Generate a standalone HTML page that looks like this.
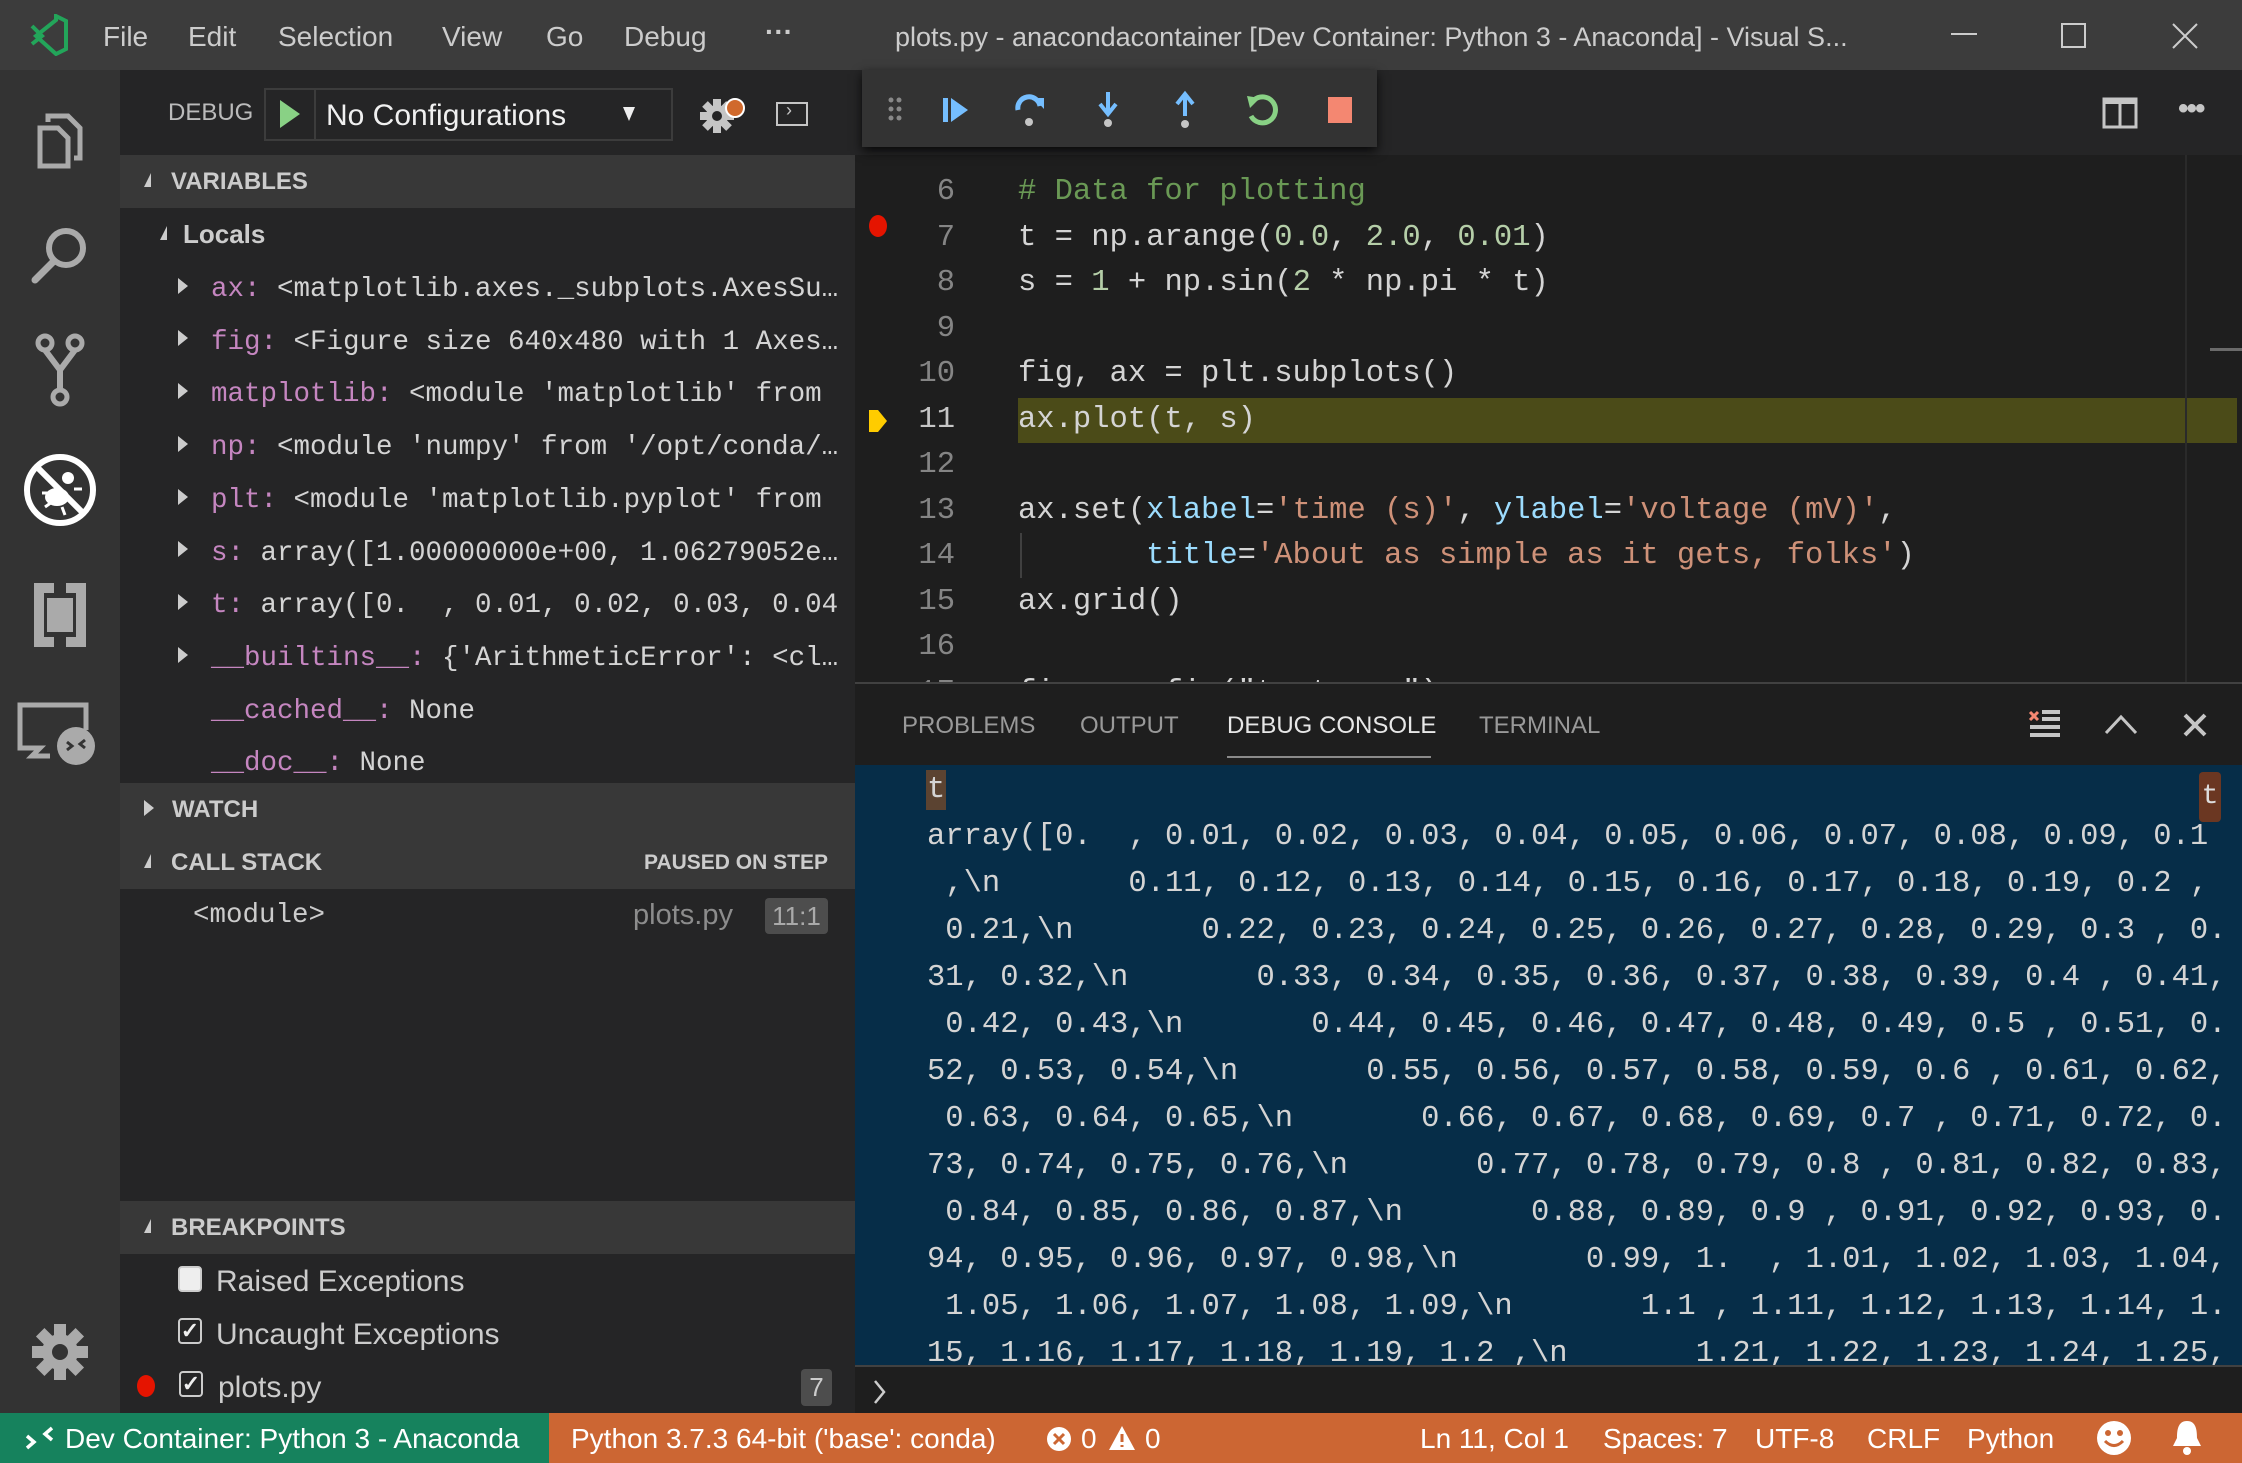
<!DOCTYPE html>
<html><head><meta charset="utf-8"><style>
*{margin:0;padding:0;box-sizing:border-box}
body{width:2242px;height:1463px;overflow:hidden;background:#1e1e1e;font-family:"Liberation Sans",sans-serif;color:#ccc;position:relative}
.a{position:absolute}
.mono{font-family:"Liberation Mono",monospace}
.t{white-space:pre}
.row{position:absolute;left:0;width:667px;height:53px;line-height:53px;white-space:pre;overflow:hidden;text-overflow:ellipsis;font-family:"Liberation Mono",monospace;font-size:27.5px;color:#d4d4d4;display:block}
.n{color:#c586c0}
.tri{display:inline-block;width:0;height:0;border-top:8px solid transparent;border-bottom:8px solid transparent;border-left:10px solid #ccc;vertical-align:middle;margin-right:23px;position:relative;top:-3px}
.trid{display:inline-block;width:0;height:0;border-left:7px solid transparent;border-bottom:14px solid #ccc;vertical-align:middle;margin-right:18px;position:relative;top:-3px}
.hdr{position:absolute;left:120px;width:735px;height:53px;line-height:53px;background:#383838;font-weight:bold;font-size:24px;color:#ccc;padding-left:24px}
.code{position:absolute;left:855px;width:1387px;height:45.5px;line-height:45.5px;font-family:"Liberation Mono",monospace;font-size:30.5px;color:#d4d4d4;white-space:pre}
.ln{position:absolute;width:100px;text-align:right;left:0;color:#858585}
.cx{position:absolute;left:163px}
.s{color:#ce9178}.nu{color:#b5cea8}.v{color:#9cdcfe}.c{color:#6a9955}
.cl{position:absolute;left:927px;height:47px;line-height:47px;font-family:"Liberation Mono",monospace;font-size:30.5px;color:#d4d4d4;white-space:pre}
.ic{position:absolute;left:0;width:120px}
</style></head><body>
<!-- title bar -->
<div class="a" style="left:0;top:0;width:2242px;height:70px;background:#3c3c3c"></div>
<svg class="a" style="left:28px;top:14px" width="40" height="42" viewBox="0 0 40 42"><path d="M28 2 L38 7 V35 L28 40 L8 22 L28 6 Z" fill="none" stroke="#23a55a" stroke-width="4"/><path d="M4 12 L14 22 L4 30" stroke="#23a55a" stroke-width="4" fill="none"/></svg>
<div class="a t" style="left:103px;top:17px;font-size:28px;color:#ccc;line-height:40px">File</div>
<div class="a t" style="left:188px;top:17px;font-size:28px;color:#ccc;line-height:40px">Edit</div>
<div class="a t" style="left:278px;top:17px;font-size:28px;color:#ccc;line-height:40px">Selection</div>
<div class="a t" style="left:442px;top:17px;font-size:28px;color:#ccc;line-height:40px">View</div>
<div class="a t" style="left:546px;top:17px;font-size:28px;color:#ccc;line-height:40px">Go</div>
<div class="a t" style="left:624px;top:17px;font-size:28px;color:#ccc;line-height:40px">Debug</div>
<div class="a t" style="left:765px;top:12px;font-size:28px;color:#ccc;line-height:40px;font-weight:bold">···</div>
<div class="a t" style="left:895px;top:17px;font-size:27px;color:#ccc;line-height:40px">plots.py - anacondacontainer [Dev Container: Python 3 - Anaconda] - Visual S...</div>
<div class="a" style="left:1951px;top:33px;width:26px;height:2px;background:#ccc"></div>
<div class="a" style="left:2061px;top:23px;width:25px;height:25px;border:2px solid #ccc"></div>
<svg class="a" style="left:2171px;top:22px" width="28" height="28"><path d="M2 2L26 26M26 2L2 26" stroke="#ccc" stroke-width="2"/></svg>

<!-- activity bar -->
<div class="a" style="left:0;top:70px;width:120px;height:1343px;background:#333"></div>
<svg class="ic" style="top:90px" height="90" viewBox="0 0 120 90"><path d="M40 38 h18 l10 10 v28 h-28 z" fill="none" stroke="#aaa" stroke-width="5"/><path d="M48 32 v-6 h20 l12 12 v30 h-6" fill="none" stroke="#aaa" stroke-width="5"/></svg>
<svg class="ic" style="top:210px" height="90" viewBox="0 0 120 90"><circle cx="66" cy="38" r="17" fill="none" stroke="#aaa" stroke-width="6"/><path d="M53 52 L35 70" stroke="#aaa" stroke-width="7" stroke-linecap="round"/></svg>
<svg class="ic" style="top:325px" height="90" viewBox="0 0 120 90"><circle cx="45" cy="18" r="7" fill="none" stroke="#aaa" stroke-width="5"/><circle cx="75" cy="18" r="7" fill="none" stroke="#aaa" stroke-width="5"/><circle cx="60" cy="72" r="7" fill="none" stroke="#aaa" stroke-width="5"/><path d="M45 25 L60 45 L75 25 M60 45 V65" fill="none" stroke="#aaa" stroke-width="6"/></svg>
<svg class="ic" style="top:445px" height="90" viewBox="0 0 120 90"><circle cx="60" cy="45" r="33" fill="none" stroke="#fff" stroke-width="6"/><path d="M37 22 L83 68" stroke="#fff" stroke-width="6"/><ellipse cx="57" cy="52" rx="12" ry="9" fill="#fff"/><circle cx="68" cy="33" r="6" fill="#fff"/><path d="M42 48 h8 M45 62 l7 -5 M62 62 l3 8 M74 44 h8" stroke="#fff" stroke-width="3"/></svg>
<svg class="ic" style="top:570px" height="90" viewBox="0 0 120 90"><path d="M34 13 h20 v10 h-10 v44 h10 v10 h-20z M86 13 h-20 v10 h10 v44 h-10 v10 h20z" fill="#aaa"/><rect x="47" y="28" width="26" height="34" fill="#aaa"/></svg>
<svg class="ic" style="top:690px" height="90" viewBox="0 0 120 90"><path d="M20 50 V15 h66 v25" fill="none" stroke="#aaa" stroke-width="5"/><path d="M20 50 v8 h20 l-8 8 h18" fill="none" stroke="#aaa" stroke-width="5"/><circle cx="76" cy="56" r="19" fill="#aaa"/><path d="M67 52 l5 4 l-5 4 M85 50 l-5 4 l5 4" stroke="#333" stroke-width="3" fill="none"/></svg>
<svg class="ic" style="top:1315px" height="75" viewBox="0 0 120 75"><g fill="#aaa" transform="translate(60 37)"><circle r="18"/><rect x="-6" y="-28" width="12" height="56"/><rect x="-6" y="-28" width="12" height="56" transform="rotate(45)"/><rect x="-6" y="-28" width="12" height="56" transform="rotate(90)"/><rect x="-6" y="-28" width="12" height="56" transform="rotate(135)"/></g><circle cx="60" cy="37" r="8" fill="#333"/></svg>

<!-- sidebar -->
<div class="a" style="left:120px;top:70px;width:735px;height:1343px;background:#252526"></div>
<div class="a t" style="left:168px;top:96px;font-size:24px;color:#bbb;line-height:34px">DEBUG</div>
<div class="a" style="left:264px;top:88px;width:409px;height:53px;border:2px solid #3c3c3c;background:#252526"></div>
<div class="a" style="left:314px;top:90px;width:2px;height:49px;background:#3c3c3c"></div>
<svg class="a" style="left:278px;top:98px" width="24" height="32"><path d="M2 2 L22 16 L2 30z" fill="#89d185"/></svg>
<div class="a t" style="left:326px;top:96px;font-size:30px;color:#f0f0f0;line-height:40px">No Configurations</div>
<svg class="a" style="left:622px;top:106px" width="14" height="16"><path d="M1 1 H13 L7 15z" fill="#eee"/></svg>
<svg class="a" style="left:697px;top:94px" width="52" height="42"><g fill="#c5c5c5" transform="translate(20 22)"><circle r="11"/><rect x="-4" y="-17" width="8" height="34"/><rect x="-4" y="-17" width="8" height="34" transform="rotate(45)"/><rect x="-4" y="-17" width="8" height="34" transform="rotate(90)"/><rect x="-4" y="-17" width="8" height="34" transform="rotate(135)"/></g><circle cx="20" cy="22" r="5" fill="#252526"/><circle cx="38" cy="14" r="9" fill="#d0692c" stroke="#fff" stroke-width="2"/></svg>
<div class="a" style="left:776px;top:102px;width:32px;height:24px;border:2px solid #c5c5c5"></div>
<div class="a t" style="left:786px;top:100px;font-size:18px;color:#c5c5c5">›</div>

<div class="hdr" style="top:155px"><span class="trid" style="margin-right:20px"></span>VARIABLES</div>
<div class="a t" style="left:160px;top:208px;height:53px;line-height:53px;font-size:26px;font-weight:bold;color:#ccc"><span class="trid" style="margin-right:16px"></span>Locals</div>
<div class="a" style="left:178px;top:263px;width:667px;height:530px">
<div class="row" style="top:0"><span class="tri"></span><span class="n">ax:</span> &lt;matplotlib.axes._subplots.AxesSubplot</div>
<div class="row" style="top:52.7px"><span class="tri"></span><span class="n">fig:</span> &lt;Figure size 640x480 with 1 Axes&gt; xx</div>
<div class="row" style="top:105.4px"><span class="tri"></span><span class="n">matplotlib:</span> &lt;module 'matplotlib' from</div>
<div class="row" style="top:158.1px"><span class="tri"></span><span class="n">np:</span> &lt;module 'numpy' from '/opt/conda/lib</div>
<div class="row" style="top:210.8px"><span class="tri"></span><span class="n">plt:</span> &lt;module 'matplotlib.pyplot' from</div>
<div class="row" style="top:263.5px"><span class="tri"></span><span class="n">s:</span> array([1.00000000e+00, 1.06279052e+00</div>
<div class="row" style="top:316.2px"><span class="tri"></span><span class="n">t:</span> array([0.  , 0.01, 0.02, 0.03, 0.04</div>
<div class="row" style="top:368.9px"><span class="tri"></span><span class="n">__builtins__:</span> {'ArithmeticError': &lt;class</div>
<div class="row" style="top:421.6px;padding-left:33px"><span class="n">__cached__:</span> None</div>
<div class="row" style="top:474.3px;padding-left:33px"><span class="n">__doc__:</span> None</div>
</div>
<div class="hdr" style="top:783px"><span class="tri" style="margin-right:18px;border-left-color:#ccc"></span>WATCH</div>
<div class="hdr" style="top:836px"><span class="trid" style="margin-right:20px"></span>CALL STACK<span style="position:absolute;right:27px;font-size:21px">PAUSED ON STEP</span></div>
<div class="a mono t" style="left:193px;top:889px;line-height:53px;font-size:27.5px;color:#ccc">&lt;module&gt;</div>
<div class="a t" style="left:633px;top:889px;line-height:53px;font-size:29px;color:#8c8c8c">plots.py</div>
<div class="a t" style="left:765px;top:898px;width:63px;height:36px;line-height:36px;text-align:center;background:#4d4d4d;border-radius:4px;font-size:26px;color:#aaa">11:1</div>
<div class="hdr" style="top:1201px"><span class="trid" style="margin-right:20px"></span>BREAKPOINTS</div>
<div class="a" style="left:178px;top:1266px;width:24px;height:26px;border:2px solid #ccc;border-radius:4px;background:#eee"></div>
<div class="a t" style="left:216px;top:1257px;line-height:50px;font-size:30px;color:#ccc">Raised Exceptions</div>
<div class="a" style="left:178px;top:1318px;width:24px;height:26px;border:2px solid #ccc;border-radius:4px;background:#252526;color:#eee;font-size:22px;line-height:22px;text-align:center;font-weight:bold">✓</div>
<div class="a t" style="left:216px;top:1310px;line-height:50px;font-size:30px;color:#ccc">Uncaught Exceptions</div>
<div class="a" style="left:137px;top:1375px;width:18px;height:22px;border-radius:50%;background:#e51400"></div>
<div class="a" style="left:179px;top:1371px;width:24px;height:26px;border:2px solid #ccc;border-radius:4px;background:#252526;color:#eee;font-size:22px;line-height:22px;text-align:center;font-weight:bold">✓</div>
<div class="a t" style="left:218px;top:1363px;line-height:50px;font-size:30px;color:#ccc">plots.py</div>
<div class="a t" style="left:801px;top:1369px;width:31px;height:37px;line-height:37px;text-align:center;background:#4d4d4d;border-radius:4px;font-size:26px;color:#ccc">7</div>

<!-- editor tabs area -->
<div class="a" style="left:855px;top:70px;width:1387px;height:85px;background:#252526"></div>
<svg class="a" style="left:2102px;top:97px" width="36" height="32"><rect x="2" y="2" width="32" height="28" fill="none" stroke="#c5c5c5" stroke-width="3"/><path d="M18 2V30" stroke="#c5c5c5" stroke-width="3"/><rect x="2" y="2" width="32" height="5" fill="#c5c5c5"/></svg>
<div class="a t" style="left:2178px;top:92px;font-size:30px;font-weight:bold;color:#c5c5c5;letter-spacing:-2px">•••</div>

<!-- code -->
<div class="a" style="left:855px;top:155px;width:1387px;height:527px;background:#1e1e1e;overflow:hidden">
<div class="a" style="left:163px;top:242.5px;width:1219px;height:45.5px;background:#4b4b18"></div>
<div class="a" style="left:165px;top:378px;width:2px;height:45px;background:#404040"></div>
<div class="a" style="left:1330px;top:0;width:2px;height:527px;background:#2a2a2a"></div>
<div class="a" style="left:1355px;top:193px;width:32px;height:3px;background:#6a6a6a"></div>
<div class="code" style="left:0;top:15px"><span class="ln">6</span><span class="cx c"># Data for plotting</span></div>
<div class="code" style="left:0;top:60.5px"><span class="ln">7</span><span class="cx">t = np.arange(<span class="nu">0.0</span>, <span class="nu">2.0</span>, <span class="nu">0.01</span>)</span></div>
<div class="code" style="left:0;top:106px"><span class="ln">8</span><span class="cx">s = <span class="nu">1</span> + np.sin(<span class="nu">2</span> * np.pi * t)</span></div>
<div class="code" style="left:0;top:151.5px"><span class="ln">9</span></div>
<div class="code" style="left:0;top:197px"><span class="ln">10</span><span class="cx">fig, ax = plt.subplots()</span></div>
<div class="code" style="left:0;top:242.5px"><span class="ln" style="color:#c6c6c6">11</span><span class="cx">ax.plot(t, s)</span></div>
<div class="code" style="left:0;top:288px"><span class="ln">12</span></div>
<div class="code" style="left:0;top:333.5px"><span class="ln">13</span><span class="cx">ax.set(<span class="v">xlabel</span>=<span class="s">'time (s)'</span>, <span class="v">ylabel</span>=<span class="s">'voltage (mV)'</span>,</span></div>
<div class="code" style="left:0;top:379px"><span class="ln">14</span><span class="cx">       <span class="v">title</span>=<span class="s">'About as simple as it gets, folks'</span>)</span></div>
<div class="code" style="left:0;top:424.5px"><span class="ln">15</span><span class="cx">ax.grid()</span></div>
<div class="code" style="left:0;top:470px"><span class="ln">16</span></div>
<div class="code" style="left:0;top:515.5px"><span class="ln">17</span><span class="cx">fig.savefig("test.png")</span></div>
<div class="a" style="left:14px;top:60px;width:18px;height:22px;border-radius:50%;background:#e51400"></div>
<svg class="a" style="left:13px;top:254px" width="20" height="24"><path d="M1 1 H10 L19 12 L10 23 H1z" fill="#ffcc00"/></svg>
</div>

<!-- debug toolbar -->
<div class="a" style="left:862px;top:70px;width:515px;height:77px;background:#333;box-shadow:0 4px 10px rgba(0,0,0,.8)"></div>
<svg class="a" style="left:887px;top:96px" width="16" height="26"><g fill="#888"><circle cx="4" cy="4" r="2.5"/><circle cx="12" cy="4" r="2.5"/><circle cx="4" cy="13" r="2.5"/><circle cx="12" cy="13" r="2.5"/><circle cx="4" cy="22" r="2.5"/><circle cx="12" cy="22" r="2.5"/></g></svg>
<svg class="a" style="left:940px;top:94px" width="32" height="32"><rect x="3" y="4" width="5" height="24" fill="#75beff"/><path d="M11 4 L28 16 L11 28z" fill="#75beff"/></svg>
<svg class="a" style="left:1012px;top:92px" width="36" height="38"><path d="M6 18 A11 11 0 0 1 28 14" fill="none" stroke="#75beff" stroke-width="5"/><path d="M22 6 H32 V17z" fill="#75beff"/><circle cx="17" cy="30" r="4" fill="#c5c5c5"/></svg>
<svg class="a" style="left:1096px;top:90px" width="24" height="40"><path d="M12 2 V22" stroke="#75beff" stroke-width="4"/><path d="M4 14 L12 24 L20 14" stroke="#75beff" stroke-width="4" fill="none"/><circle cx="12" cy="33" r="4" fill="#c5c5c5"/></svg>
<svg class="a" style="left:1173px;top:90px" width="24" height="40"><path d="M12 6 V26" stroke="#75beff" stroke-width="4"/><path d="M4 14 L12 4 L20 14" stroke="#75beff" stroke-width="4" fill="none"/><circle cx="12" cy="34" r="4" fill="#c5c5c5"/></svg>
<svg class="a" style="left:1244px;top:92px" width="38" height="38"><path d="M10 8 A13 13 0 1 1 7 24" fill="none" stroke="#89d185" stroke-width="5"/><path d="M3 4 L16 6 L6 16z" fill="#89d185"/></svg>
<div class="a" style="left:1328px;top:97px;width:24px;height:26px;background:#f48771"></div>

<!-- panel -->
<div class="a" style="left:855px;top:682px;width:1387px;height:731px;background:#1e1e1e;border-top:2px solid #414141"></div>
<div class="a t" style="left:902px;top:708px;font-size:24px;color:#999;line-height:36px">PROBLEMS</div>
<div class="a t" style="left:1080px;top:708px;font-size:24px;color:#999;line-height:36px">OUTPUT</div>
<div class="a t" style="left:1227px;top:708px;font-size:24px;color:#e7e7e7;line-height:36px">DEBUG CONSOLE</div>
<div class="a" style="left:1227px;top:756px;width:204px;height:2px;background:#8a8a8a"></div>
<div class="a t" style="left:1479px;top:708px;font-size:24px;color:#999;line-height:36px">TERMINAL</div>
<svg class="a" style="left:2026px;top:706px" width="36" height="36"><path d="M4 6 L12 14 M12 6 L4 14" stroke="#f48771" stroke-width="3"/><path d="M16 6H34M16 13H34M4 21H34M4 29H34" stroke="#c5c5c5" stroke-width="4"/></svg>
<svg class="a" style="left:2103px;top:712px" width="36" height="24"><path d="M3 21 L18 5 L33 21" stroke="#c5c5c5" stroke-width="3" fill="none"/></svg>
<svg class="a" style="left:2182px;top:712px" width="26" height="26"><path d="M3 3L23 23M23 3L3 23" stroke="#c5c5c5" stroke-width="4"/></svg>

<div class="a" style="left:855px;top:765px;width:1387px;height:600px;background:#062d48;overflow:hidden"></div>
<div class="a mono" style="left:926px;top:770px;width:20px;height:40px;background:#5b4331"></div>
<div class="a mono t" style="left:927px;top:767px;font-size:30.5px;line-height:47px;color:#d4d4d4">t</div>
<div class="a mono t" style="left:2199px;top:772px;width:22px;height:50px;background:#6b3722;border-radius:4px;font-size:28px;line-height:50px;color:#ddd;text-align:center">t</div>
<div class="a" style="left:855px;top:765px;width:1387px;height:600px;overflow:hidden">
<div class="cl" style="left:72px;top:49px">array([0.  , 0.01, 0.02, 0.03, 0.04, 0.05, 0.06, 0.07, 0.08, 0.09, 0.1</div>
<div class="cl" style="left:72px;top:96px"> ,\n       0.11, 0.12, 0.13, 0.14, 0.15, 0.16, 0.17, 0.18, 0.19, 0.2 ,</div>
<div class="cl" style="left:72px;top:143px"> 0.21,\n       0.22, 0.23, 0.24, 0.25, 0.26, 0.27, 0.28, 0.29, 0.3 , 0.</div>
<div class="cl" style="left:72px;top:190px">31, 0.32,\n       0.33, 0.34, 0.35, 0.36, 0.37, 0.38, 0.39, 0.4 , 0.41,</div>
<div class="cl" style="left:72px;top:237px"> 0.42, 0.43,\n       0.44, 0.45, 0.46, 0.47, 0.48, 0.49, 0.5 , 0.51, 0.</div>
<div class="cl" style="left:72px;top:284px">52, 0.53, 0.54,\n       0.55, 0.56, 0.57, 0.58, 0.59, 0.6 , 0.61, 0.62,</div>
<div class="cl" style="left:72px;top:331px"> 0.63, 0.64, 0.65,\n       0.66, 0.67, 0.68, 0.69, 0.7 , 0.71, 0.72, 0.</div>
<div class="cl" style="left:72px;top:378px">73, 0.74, 0.75, 0.76,\n       0.77, 0.78, 0.79, 0.8 , 0.81, 0.82, 0.83,</div>
<div class="cl" style="left:72px;top:425px"> 0.84, 0.85, 0.86, 0.87,\n       0.88, 0.89, 0.9 , 0.91, 0.92, 0.93, 0.</div>
<div class="cl" style="left:72px;top:472px">94, 0.95, 0.96, 0.97, 0.98,\n       0.99, 1.  , 1.01, 1.02, 1.03, 1.04,</div>
<div class="cl" style="left:72px;top:519px"> 1.05, 1.06, 1.07, 1.08, 1.09,\n       1.1 , 1.11, 1.12, 1.13, 1.14, 1.</div>
<div class="cl" style="left:72px;top:566px">15, 1.16, 1.17, 1.18, 1.19, 1.2 ,\n       1.21, 1.22, 1.23, 1.24, 1.25,</div>
</div>
<div class="a" style="left:855px;top:1365px;width:1387px;height:2px;background:#414141"></div>
<svg class="a" style="left:872px;top:1378px" width="16" height="28"><path d="M3 3 L12 14 L3 25" stroke="#ccc" stroke-width="2.5" fill="none"/></svg>

<!-- status bar -->
<div class="a" style="left:0;top:1413px;width:549px;height:50px;background:#16825d"></div>
<div class="a" style="left:549px;top:1413px;width:1693px;height:50px;background:#cc6633"></div>
<svg class="a" style="left:24px;top:1424px" width="32" height="28"><path d="M3 12 L10 18 L3 24 M28 4 L21 10 L28 16" stroke="#fff" stroke-width="3.5" fill="none"/></svg>
<div class="a t" style="left:65px;top:1420px;font-size:28px;line-height:38px;color:#fff">Dev Container: Python 3 - Anaconda</div>
<div class="a t" style="left:571px;top:1420px;font-size:28px;line-height:38px;color:#fff">Python 3.7.3 64-bit ('base': conda)</div>
<svg class="a" style="left:1045px;top:1425px" width="28" height="28"><circle cx="14" cy="14" r="12" fill="#fff"/><path d="M9 9L19 19M19 9L9 19" stroke="#cc6633" stroke-width="3"/></svg>
<div class="a t" style="left:1081px;top:1420px;font-size:28px;line-height:38px;color:#fff">0</div>
<svg class="a" style="left:1108px;top:1424px" width="28" height="28"><path d="M14 2 L27 26 H1z" fill="#fff"/><path d="M14 10V18M14 21V23" stroke="#cc6633" stroke-width="3"/></svg>
<div class="a t" style="left:1145px;top:1420px;font-size:28px;line-height:38px;color:#fff">0</div>
<div class="a t" style="left:1420px;top:1420px;font-size:28px;line-height:38px;color:#fff">Ln 11, Col 1</div>
<div class="a t" style="left:1603px;top:1420px;font-size:28px;line-height:38px;color:#fff">Spaces: 7</div>
<div class="a t" style="left:1755px;top:1420px;font-size:28px;line-height:38px;color:#fff">UTF-8</div>
<div class="a t" style="left:1867px;top:1420px;font-size:28px;line-height:38px;color:#fff">CRLF</div>
<div class="a t" style="left:1967px;top:1420px;font-size:28px;line-height:38px;color:#fff">Python</div>
<svg class="a" style="left:2096px;top:1420px" width="36" height="36"><circle cx="18" cy="18" r="17" fill="#fff"/><circle cx="12" cy="13" r="3" fill="#cc6633"/><circle cx="24" cy="13" r="3" fill="#cc6633"/><path d="M9 21 Q18 30 27 21" stroke="#cc6633" stroke-width="3" fill="none"/></svg>
<svg class="a" style="left:2170px;top:1418px" width="34" height="40"><path d="M17 3 C8 3 7 12 7 20 L3 28 H31 L27 20 C27 12 26 3 17 3z" fill="#fff"/><circle cx="17" cy="33" r="4" fill="#fff"/></svg>
</body></html>
